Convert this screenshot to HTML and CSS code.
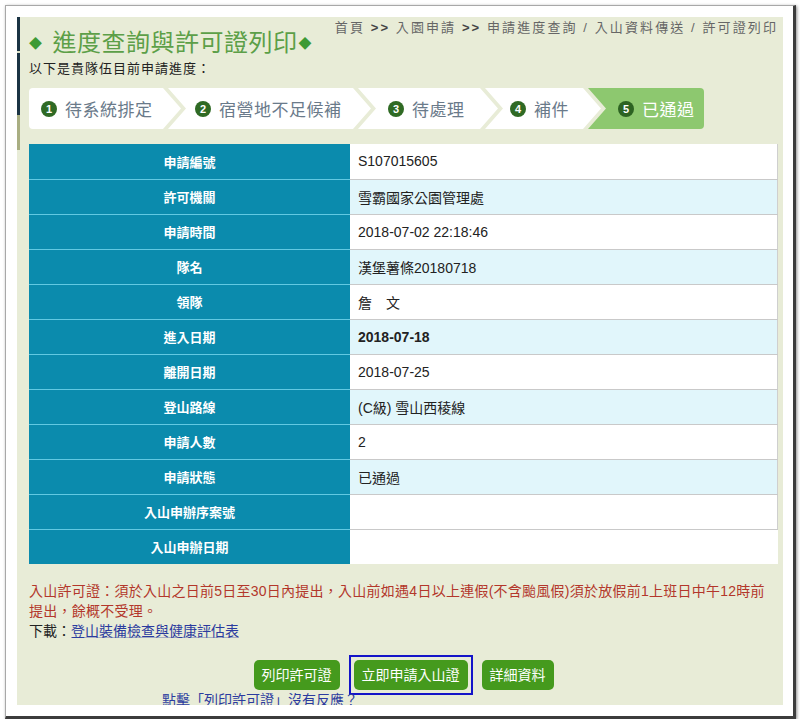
FILE: index.html
```html
<!DOCTYPE html>
<html lang="zh-Hant">
<head>
<meta charset="utf-8">
<title>進度查詢與許可證列印</title>
<link rel="stylesheet" href="styles.css">
</head>
<body>
<div class="frame">
  <div class="page">
    <div class="header">
      <h1 class="title"><span class="dia">◆</span>進度查詢與許可證列印<span class="dia dia-end">◆</span></h1>
      <div class="crumb">首頁 <b>&gt;&gt;</b> 入園申請 <b>&gt;&gt;</b> 申請進度查詢 / 入山資料傳送 / 許可證列印</div>
    </div>
    <div class="sub">以下是貴隊伍目前申請進度：</div>
    <div class="steps">
      <div class="step s1"><span class="num">1</span><span class="lbl">待系統排定</span></div>
      <div class="step s2"><span class="num">2</span><span class="lbl">宿營地不足候補</span></div>
      <div class="step s3"><span class="num">3</span><span class="lbl">待處理</span></div>
      <div class="step s4"><span class="num">4</span><span class="lbl">補件</span></div>
      <div class="step s5 active"><span class="num">5</span><span class="lbl">已通過</span></div>
    </div>
    <table class="info">
      <tr><th>申請編號</th><td>S107015605</td></tr>
      <tr class="alt"><th>許可機關</th><td>雪霸國家公園管理處</td></tr>
      <tr><th>申請時間</th><td>2018-07-02 22:18:46</td></tr>
      <tr class="alt"><th>隊名</th><td>漢堡薯條20180718</td></tr>
      <tr><th>領隊</th><td>詹　文</td></tr>
      <tr class="alt"><th>進入日期</th><td class="strong">2018-07-18</td></tr>
      <tr><th>離開日期</th><td>2018-07-25</td></tr>
      <tr class="alt"><th>登山路線</th><td>(C級) 雪山西稜線</td></tr>
      <tr><th>申請人數</th><td>2</td></tr>
      <tr class="alt"><th>申請狀態</th><td>已通過</td></tr>
      <tr><th>入山申辦序案號</th><td></td></tr>
      <tr class="last"><th>入山申辦日期</th><td></td></tr>
    </table>
    <div class="notes">
      <p class="warn">入山許可證：須於入山之日前5日至30日內提出，入山前如遇4日以上連假(不含颱風假)須於放假前1上班日中午12時前<br>提出，餘概不受理。</p>
      <p class="dl">下載：<a href="#">登山裝備檢查與健康評估表</a></p>
    </div>
    <div class="buttons">
      <button class="btn">列印許可證</button>
      <span class="focus-ring"><button class="btn">立即申請入山證</button></span>
      <button class="btn">詳細資料</button>
    </div>
    <div class="help"><a href="#">點擊「列印許可證」沒有反應？</a></div>
  </div>
</div>
</body>
</html>
```

FILE: styles.css
```css
html, body {
  margin: 0;
  padding: 0;
  background: #ffffff;
}
body {
  font-family: "Liberation Sans", "Noto Sans CJK TC", sans-serif;
  color: #222;
}
.frame {
  box-sizing: border-box;
  width: 791px;
  height: 714px;
  margin: 5px 0 0 5px;
  padding: 11px 10px 11px 11px;
  background: #fff;
  border-top: 1px solid #a8a8a8;
  border-left: 1px solid #a8a8a8;
  border-right: 3px solid #3c3c3c;
  border-bottom: 3px solid #3c3c3c;
  box-shadow: 1px 1px 3px rgba(0, 0, 0, 0.45);
}
.page {
  height: 688px;
  overflow: hidden;
  padding: 0 5px 0 12px;
  background:
    linear-gradient(to bottom, #1b3444 0, #1b3444 34px, #dfe4cc 34px, #dfe4cc 36px, #1b3444 36px, #1b3444 98px, #a9ae82 98px, #a9ae82 133px, transparent 133px) no-repeat 0 0 / 3px 133px,
    #e8ecd7;
}
.header {
  display: flex;
  justify-content: space-between;
  align-items: flex-start;
}
.title {
  margin: 11px 0 0 0;
  font-size: 24px;
  line-height: 30px;
  font-weight: normal;
  color: #5c9f48;
  letter-spacing: 0.5px;
}
.dia {
  font-size: 13px;
  color: #3d9a35;
  margin-right: 10px;
  vertical-align: 3px;
}
.dia-end {
  margin-right: 0;
  margin-left: 1px;
}
.crumb {
  margin-top: 2px;
  font-size: 13px;
  line-height: 18px;
  color: #666;
  letter-spacing: 2.1px;
}
.crumb b {
  color: #444;
}
.sub {
  margin-top: 1px;
  font-size: 13px;
  line-height: 18px;
  color: #222;
  letter-spacing: 1px;
}
.steps {
  display: flex;
  margin-top: 10px;
  height: 41px;
}
.step {
  box-sizing: border-box;
  display: flex;
  align-items: center;
  height: 41px;
  background: #fff;
  padding-left: 28px;
  margin-left: -13px;
  clip-path: polygon(0 0, calc(100% - 18px) 0, 100% 50%, calc(100% - 18px) 100%, 0 100%, 18px 50%);
}
.s1 {
  width: 152px;
  margin-left: 0;
  padding-left: 12px;
  border-radius: 4px 0 0 4px;
  clip-path: polygon(0 0, calc(100% - 18px) 0, 100% 50%, calc(100% - 18px) 100%, 0 100%);
}
.s2 { width: 203px; padding-left: 27px; }
.s3 { width: 140px; padding-left: 30px; }
.s4 { width: 116px; padding-left: 25px; }
.s5 {
  width: 116px;
  padding-left: 30px;
  border-radius: 0 4px 4px 0;
  clip-path: polygon(0 0, 100% 0, 100% 100%, 0 100%, 18px 50%);
}
.num {
  width: 16px;
  height: 16px;
  border-radius: 50%;
  background: #2f6a24;
  color: #fff;
  font-size: 11px;
  font-weight: bold;
  line-height: 16px;
  text-align: center;
  flex: none;
}
.lbl {
  margin-left: 8px;
  font-size: 17px;
  color: #6a7a8a;
  letter-spacing: 0.5px;
}
.active {
  background: #8dc86f;
}
.active .num {
  background: #2d6322;
}
.active .lbl {
  color: #fff;
}
.info {
  margin-top: 15px;
  width: 749px;
  border-collapse: collapse;
  table-layout: fixed;
}
.info tr {
  height: 35px;
}
.info th {
  width: 321px;
  padding: 0;
  background: #0b8bad;
  color: #fff;
  font-size: 13px;
  font-weight: bold;
  text-align: center;
  border-bottom: 1px solid #62c9e2;
}
.info td {
  padding: 0 0 0 8px;
  background: #fff;
  font-size: 14px;
  color: #222;
  border-bottom: 1px solid #c9c9c9;
  border-right: 1px solid #cfcfcf;
}
.info tr.alt td {
  background: #e1f6fb;
}
.info tr.last th,
.info tr.last td {
  border-bottom: none;
}
.info tr.last td {
  border-right: none;
}
.info td.strong {
  font-weight: bold;
}
.notes {
  margin-top: 17px;
  font-size: 14px;
  line-height: 20px;
}
.notes p {
  margin: 0;
}
.warn {
  color: #b3372b;
  letter-spacing: 0.25px;
}
.dl {
  color: #222;
}
.dl a {
  color: #2b3b9f;
  text-decoration: underline;
  text-decoration-color: rgba(43, 59, 159, 0.35);
}
.buttons {
  display: flex;
  justify-content: center;
  align-items: center;
  gap: 14px;
  margin-top: 19px;
  height: 30px;
}
.btn {
  height: 30px;
  padding: 0 8px;
  border: none;
  border-radius: 5px;
  background: #459a1d;
  color: #fff;
  font-family: "Liberation Sans", "Noto Sans CJK TC", sans-serif;
  font-size: 14px;
  line-height: 30px;
  display: block;
}
.focus-ring {
  display: block;
  padding: 3px;
  margin: 0 -5px;
  border: 2px solid #1414c8;
}
.help {
  padding-left: 133px;
  font-size: 14px;
  line-height: 20px;
}
.help a {
  color: #2b3b9f;
  text-decoration: none;
}
```
